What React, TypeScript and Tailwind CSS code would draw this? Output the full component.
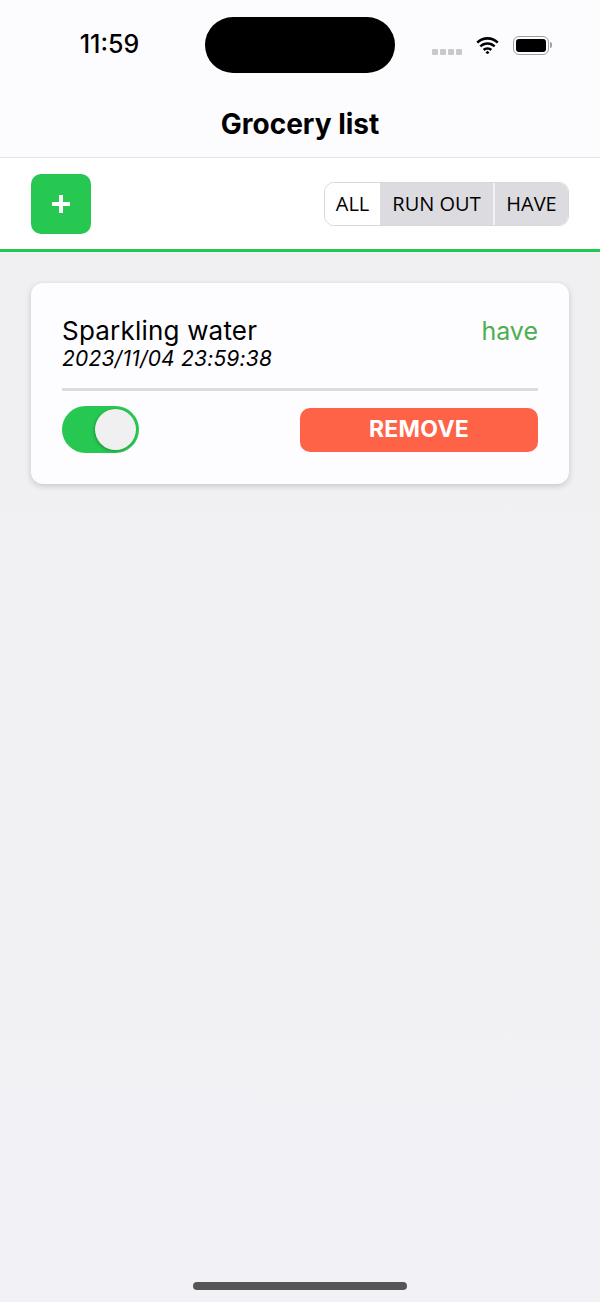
const font = { fontFamily: '"Inter", "Liberation Sans", sans-serif' };

export default function App() {
  return (
    <div className="w-[600px] h-[1302px] flex flex-col bg-[#f0eff3] text-black" style={font}>
      {/* status bar + title */}
      <div className="bg-[#fcfbfe]">
        <div className="h-[90px] flex items-center relative">
          <div className="w-[205px] flex justify-center text-[25px] font-medium -mt-[1px] pl-[14px]">11:59</div>
          <div className="w-[190px] h-[56px] rounded-full bg-black" />
          <div className="flex-1 flex items-center pl-[37px] gap-[14px]">
            <div className="flex gap-[2px] items-center mt-[14px]">
              <span className="w-[6px] h-[6px] rounded-[1px] bg-[#c8c8cc]" />
              <span className="w-[6px] h-[6px] rounded-[1px] bg-[#c8c8cc]" />
              <span className="w-[6px] h-[6px] rounded-[1px] bg-[#c8c8cc]" />
              <span className="w-[6px] h-[6px] rounded-[1px] bg-[#c8c8cc]" />
            </div>
            <svg width="23" height="17" viewBox="0 0 24 18">
              <path d="M12 3C8 3 4.6 4.6 2 7l-1.8-2C3.3 2 7.5 0 12 0s8.7 2 11.8 5L22 7c-2.6-2.4-6-4-10-4z" fill="#000" />
              <path d="M12 8.2c-2.6 0-4.9 1-6.6 2.7L3.5 9C5.7 6.9 8.7 5.6 12 5.6s6.3 1.3 8.5 3.4l-1.9 1.9C16.9 9.2 14.6 8.2 12 8.2z" fill="#000" />
              <path d="M12 13.4c-1.2 0-2.3.5-3.1 1.3L7.1 12.8C8.4 11.6 10.1 10.8 12 10.8s3.6.8 4.9 2l-1.8 1.9c-.8-.8-1.9-1.3-3.1-1.3z M12 14.5l2.2 2.3L12 18l-2.2-1.2z" fill="#000" />
            </svg>
            <div className="flex items-center">
              <div className="w-[36px] h-[19px] rounded-[6px] border-[1.5px] border-[#a0a0a4] p-[2px]">
                <div className="w-full h-full rounded-[3px] bg-black" />
              </div>
              <div className="w-[2px] h-[6px] rounded-r-full bg-[#a0a0a4] ml-[1px]" />
            </div>
          </div>
        </div>
        <div className="h-[67px] flex items-center justify-center text-[28px] font-bold pt-[1px]">Grocery list</div>
      </div>
      <div className="h-[1px] bg-[#e4e3e8]" />

      {/* toolbar */}
      <div className="bg-white h-[91px] flex items-center justify-between pl-[31px] pr-[31px]">
        <button className="w-[60px] h-[60px] rounded-[10px] bg-[#27c852] flex items-center justify-center">
          <svg width="18" height="18" viewBox="0 0 18 18">
            <rect x="7" y="0" width="4" height="18" fill="#fff" />
            <rect x="0" y="7" width="18" height="4" fill="#fff" />
          </svg>
        </button>
        <div className="flex h-[44px] rounded-[10px] border border-[#d8d8dc] overflow-hidden text-[20px]" style={{ fontFamily: '"Open Sans", "Liberation Sans", sans-serif' }}>
          <div className="w-[55px] bg-white flex items-center justify-center">ALL</div>
          <div className="w-[113px] bg-[#dcdbdf] flex items-center justify-center">RUN OUT</div>
          <div className="w-[2px] bg-[#f2f2f4]" />
          <div className="w-[73px] bg-[#dcdbdf] flex items-center justify-center">HAVE</div>
        </div>
      </div>
      <div className="h-[3px] bg-[#22c94f]" />

      {/* list */}
      <div className="flex-1 flex flex-col px-[31px] pt-[31px] bg-gradient-to-b from-[#f0f0f2] to-[#f2f1f5]">
        <div className="bg-[#fdfcff] rounded-[12px] shadow-[0_2px_6px_rgba(0,0,0,0.18)] px-[31px] pt-[32px] pb-[31px]">
          <div className="flex justify-between items-start">
            <div className="flex flex-col">
              <div className="text-[26px] leading-[32px] tracking-[0.2px]">Sparkling water</div>
              <div className="text-[21px] leading-[24px] italic tracking-[0.2px]">2023/11/04 23:59:38</div>
            </div>
            <div className="text-[25px] leading-[32px] text-[#4caf50]">have</div>
          </div>
          <div className="h-[3px] bg-[#dcdcdc] mt-[17px] mb-[15px]" />
          <div className="flex justify-between items-center">
            <div className="w-[77px] h-[47px] rounded-full bg-[#27c852] flex items-center justify-end pr-[3px]">
              <div className="w-[41px] h-[41px] rounded-full bg-[#f0f0f0] shadow-[-1px_1px_3px_rgba(0,0,0,0.25)]" />
            </div>
            <button className="w-[238px] h-[44px] rounded-[10px] bg-[#ff6347] text-white text-[23px] font-bold tracking-[0.3px]">REMOVE</button>
          </div>
        </div>
        <div className="flex-1" />
        <div className="flex justify-center pb-[12px]">
          <div className="w-[214px] h-[8px] rounded-full bg-[#555558]" />
        </div>
      </div>
    </div>
  );
}
